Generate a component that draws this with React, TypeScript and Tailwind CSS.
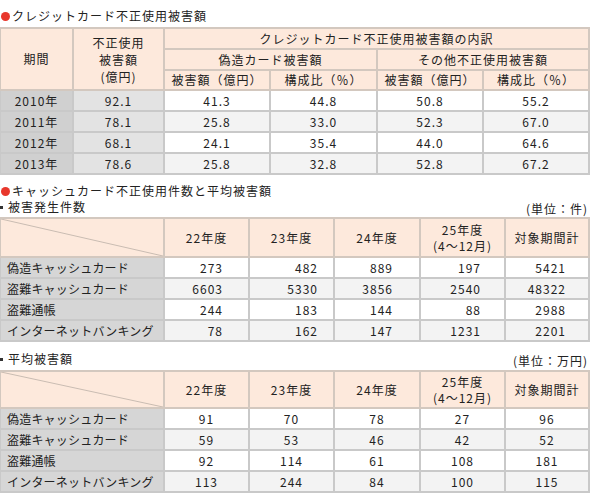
import React from "react";

const font = { fontFamily: '"Noto Sans CJK JP", "Noto Sans", sans-serif' };

const creditRows = [
  ["2010年", "92.1", "41.3", "44.8", "50.8", "55.2"],
  ["2011年", "78.1", "25.8", "33.0", "52.3", "67.0"],
  ["2012年", "68.1", "24.1", "35.4", "44.0", "64.6"],
  ["2013年", "78.6", "25.8", "32.8", "52.8", "67.2"],
];

const countRows = [
  ["偽造キャッシュカード", "273", "482", "889", "197", "5421"],
  ["盗難キャッシュカード", "6603", "5330", "3856", "2540", "48322"],
  ["盗難通帳", "244", "183", "144", "88", "2988"],
  ["インターネットバンキング", "78", "162", "147", "1231", "2201"],
];

const avgRows = [
  ["偽造キャッシュカード", "91", "70", "78", "27", "96"],
  ["盗難キャッシュカード", "59", "53", "46", "42", "52"],
  ["盗難通帳", "92", "114", "61", "108", "181"],
  ["インターネットバンキング", "113", "244", "84", "100", "115"],
];

const th = "border-2 border-[#d3c8bf] bg-[#fde9dc] font-normal text-center p-0 leading-[16px] whitespace-nowrap";
const td = "border-2 border-[#c9c9c9] p-0 leading-[16px] whitespace-nowrap";

function Heading({ children }: { children: React.ReactNode }) {
  return (
    <div className="flex items-center h-[16px] tracking-[1px]">
      <span className="w-[9px] h-[9px] rounded-full bg-[#e8372c] mr-[2px] ml-[1px]" />
      {children}
    </div>
  );
}

function SubHeading({ label, unit }: { label: string; unit: string }) {
  return (
    <div className="flex items-center justify-between h-[16px] pr-[2px] tracking-[1px]">
      <div className="flex items-center">
        <span className="w-[3px] h-[3px] bg-[#333] mr-[5px]" />
        {label}
      </div>
      <span className="translate-y-[2px]">{unit}</span>
    </div>
  );
}

function CashTable({ rows, rightPad, headH }: { rows: string[][]; rightPad: boolean; headH: string }) {
  const pads = ["pr-[25px]", "pr-[15px]", "pr-[26px]", "pr-[23px]", "pr-[22px]"];
  return (
    <table className="border-collapse table-fixed w-[589px] -ml-[1px]">
      <colgroup>
        <col className="w-[164px]" />
        <col className="w-[85px]" />
        <col className="w-[85px]" />
        <col className="w-[86px]" />
        <col className="w-[85px]" />
        <col className="w-[84px]" />
      </colgroup>
      <thead>
        <tr className={headH}>
          <th className={th + " relative"}>
            <svg className="absolute inset-0 w-full h-full" preserveAspectRatio="none" viewBox="0 0 100 100">
              <line x1="0" y1="0" x2="100" y2="100" stroke="#c9bcb2" strokeWidth="1" vectorEffect="non-scaling-stroke" />
            </svg>
          </th>
          <th className={th}>22年度</th>
          <th className={th}>23年度</th>
          <th className={th}>24年度</th>
          <th className={th + " leading-[15px]"}>
            25年度
            <br />
            (4～12月)
          </th>
          <th className={th}>対象期間計</th>
        </tr>
      </thead>
      <tbody>
        {rows.map((r, i) => (
          <tr key={r[0]} className="h-[21px]">
            <td className={td + " bg-[#d6d6d6] pl-[6px] text-left tracking-[0.2px]"}>{r[0]}</td>
            {r.slice(1).map((v, j) => (
              <td
                key={j}
                className={
                  td +
                  (i % 2 === 1 ? " bg-[#f3f3f3]" : " bg-white") +
                  (rightPad ? " text-right " + pads[j] : " text-center")
                }
              >
                {v}
              </td>
            ))}
          </tr>
        ))}
      </tbody>
    </table>
  );
}

export default function App() {
  return (
    <div className="w-[590px] h-[502px] bg-white text-[12px] text-[#222] overflow-hidden" style={font}>
      <div className="pt-[8px]">
        <Heading>クレジットカード不正使用被害額</Heading>
      </div>
      <div className="mt-[3px]">
        <table className="border-collapse table-fixed w-[589px] -ml-[1px] tracking-[1px]">
          <colgroup>
            <col className="w-[73px]" />
            <col className="w-[91px]" />
            <col className="w-[106px]" />
            <col className="w-[107px]" />
            <col className="w-[106px]" />
            <col className="w-[106px]" />
          </colgroup>
          <thead>
            <tr className="h-[21px]">
              <th rowSpan={3} className={th}>期間</th>
              <th rowSpan={3} className={th + " leading-[17px]"}>
                不正使用
                <br />
                被害額
                <br />
                (億円)
              </th>
              <th colSpan={4} className={th}>クレジットカード不正使用被害額の内訳</th>
            </tr>
            <tr className="h-[21px]">
              <th colSpan={2} className={th}>偽造カード被害額</th>
              <th colSpan={2} className={th}>その他不正使用被害額</th>
            </tr>
            <tr className="h-[20px]">
              <th className={th}>被害額（億円）</th>
              <th className={th}>構成比（％）</th>
              <th className={th}>被害額（億円）</th>
              <th className={th}>構成比（％）</th>
            </tr>
          </thead>
          <tbody>
            {creditRows.map((r, i) => (
              <tr key={r[0]} className="h-[21px]">
                <td className={td + " bg-[#d0d0d0] text-center"}>{r[0]}</td>
                <td className={td + " bg-[#e3e3e3] text-center"}>{r[1]}</td>
                {r.slice(2).map((v, j) => (
                  <td key={j} className={td + " text-center" + (i % 2 === 1 ? " bg-[#f3f3f3]" : " bg-white")}>
                    {v}
                  </td>
                ))}
              </tr>
            ))}
          </tbody>
        </table>
      </div>
      <div className="mt-[8px]">
        <Heading>キャッシュカード不正使用件数と平均被害額</Heading>
      </div>
      <SubHeading label="被害発生件数" unit="(単位：件)" />
      <div className="mt-[2px] tracking-[1px]">
        <CashTable rows={countRows} rightPad headH="h-[39px]" />
      </div>
      <div className="mt-[9px]">
        <SubHeading label="平均被害額" unit="(単位：万円)" />
      </div>
      <div className="mt-[3px] tracking-[1px]">
        <CashTable rows={avgRows} rightPad={false} headH="h-[37px]" />
      </div>
    </div>
  );
}
